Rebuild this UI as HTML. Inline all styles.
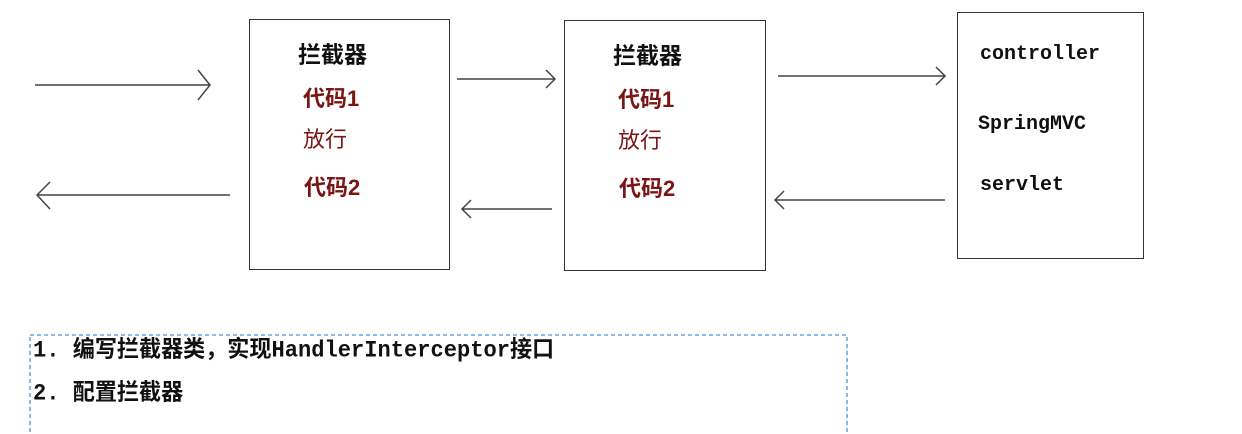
<!DOCTYPE html><html><head><meta charset="utf-8"><style>
body{margin:0;width:1242px;height:434px;background:#fff;position:relative;overflow:hidden;font-family:"Liberation Sans","Noto Sans CJK SC",sans-serif}
.b{position:absolute;border:1.5px solid #333;box-sizing:border-box}
.t{position:absolute;white-space:nowrap;line-height:1;transform:translateY(-50%)}
.h{font-size:23px;font-weight:bold;color:#111}
.r{font-size:22px;font-weight:bold;color:#7a1515}
.m{font-family:"Liberation Mono","Noto Sans CJK SC",monospace;font-weight:bold;font-size:20px;color:#111}
.n{font-family:"Liberation Mono","Noto Sans CJK SC",monospace;font-weight:bold;font-size:23px;color:#111;transform-origin:left center;transform:translateY(-50%) scaleX(0.96)}
svg{position:absolute;left:0;top:0}
</style></head><body>
<div class="b" style="left:249px;top:19px;width:201px;height:251px"></div>
<div class="b" style="left:564px;top:20px;width:202px;height:251px"></div>
<div class="b" style="left:957px;top:12px;width:187px;height:247px"></div>
<svg width="1242" height="434" fill="none" stroke="#444" stroke-width="1.5">
<path d="M35 85H210M198 70L210 85L198 100"/>
<path d="M37 195H230M50 182L37 195L50 209"/>
<path d="M457 79H555M546 70L555 79L546 88"/>
<path d="M462 209H552M471 200L462 209L471 218"/>
<path d="M778 76H945M936 67L945 76L936 85"/>
<path d="M775 200H945M784 191L775 200L784 209"/>
<rect x="30" y="335" width="817" height="110" stroke="#4a90e2" stroke-width="1.3" stroke-dasharray="4 3"/>
</svg>
<div class="t h" style="left:298px;top:55px">拦截器</div>
<div class="t r" style="left:303px;top:99px">代码1</div>
<div class="t r" style="left:303px;top:140px;font-weight:normal">放行</div>
<div class="t r" style="left:304px;top:188px">代码2</div>
<div class="t h" style="left:613px;top:56px">拦截器</div>
<div class="t r" style="left:618px;top:100px">代码1</div>
<div class="t r" style="left:618px;top:141px;font-weight:normal">放行</div>
<div class="t r" style="left:619px;top:189px">代码2</div>
<div class="t m" style="left:980px;top:55px">controller</div>
<div class="t m" style="left:978px;top:125px">SpringMVC</div>
<div class="t m" style="left:980px;top:186px">servlet</div>
<div class="t n" style="left:33px;top:351px">1. 编写拦截器类，实现HandlerInterceptor接口</div>
<div class="t n" style="left:33px;top:394px">2. 配置拦截器</div>
</body></html>
